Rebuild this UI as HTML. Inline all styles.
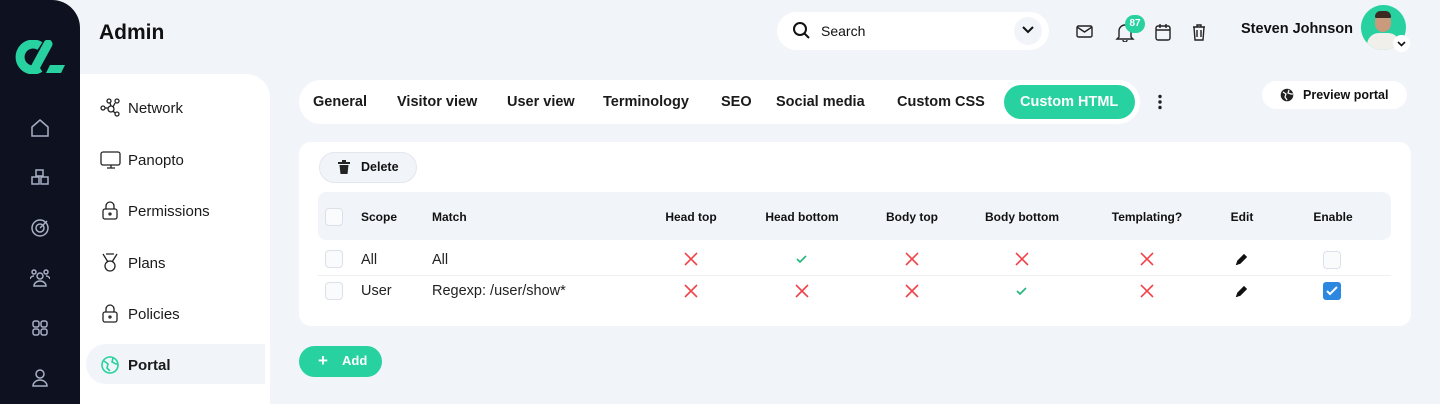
<!DOCTYPE html>
<html><head><meta charset="utf-8"><style>
*{margin:0;padding:0;box-sizing:border-box}
html,body{width:1440px;height:404px;overflow:hidden}
body{background:#f1f4f9;font-family:"Liberation Sans",sans-serif;color:#111;position:relative}
.a{position:absolute;white-space:nowrap}
.side{left:0;top:0;width:80px;height:404px;background:#0d1120;border-top-right-radius:28px}
.t{font-size:14.5px;font-weight:bold;top:94px;color:#1a1a1a}
.m{font-size:15px;left:128px;color:#1a1a1a}
.h{font-size:12px;font-weight:bold;top:210px;transform:translateX(-50%)}
.cb{width:18px;height:18px;border:1px solid #dde0e8;border-radius:4px;background:#fafbfc}
.r{font-size:14.5px;color:#222}
</style></head><body>
<div class="a side"></div>
<svg class="a" style="left:14px;top:40px" width="52" height="34" viewBox="0 0 52 34"><path d="M26 6 A13 13 0 1 0 26 28" fill="none" stroke="#28d1a0" stroke-width="9"/><path d="M34 4 L22 26" stroke="#28d1a0" stroke-width="9" stroke-linecap="round"/><path d="M36 25 H51 L47 33 H32Z" fill="#28d1a0"/></svg>
<svg class="a" style="left:30px;top:118px" width="20" height="280" fill="none" stroke="#aab0c4" stroke-width="1.5">
<path d="M2 9 L10 2 L18 9 V18 H2Z"/>
<g transform="translate(0,50)"><rect x="6" y="2" width="7" height="6"/><rect x="2" y="9" width="7" height="7"/><rect x="11" y="9" width="7" height="7"/></g>
<g transform="translate(0,100)"><circle cx="10" cy="10" r="8"/><circle cx="10" cy="10" r="4"/><path d="M10 10 L17 3"/></g>
<g transform="translate(0,150)"><circle cx="10" cy="8" r="3"/><path d="M4 18 a6 5 0 0 1 12 0Z"/><circle cx="4" cy="4" r="2"/><circle cx="16" cy="4" r="2"/><path d="M0 11a4 4 0 0 1 4-3 M20 11a4 4 0 0 0-4-3"/></g>
<g transform="translate(0,200)"><rect x="3" y="3" width="6" height="6" rx="2"/><rect x="11" y="3" width="6" height="6" rx="2"/><rect x="3" y="11" width="6" height="6" rx="2"/><rect x="11" y="11" width="6" height="6" rx="2"/></g>
<g transform="translate(0,250)"><circle cx="10" cy="6" r="4"/><path d="M3 18 a7 6 0 0 1 14 0Z"/></g>
</svg>
<div class="a" style="left:99px;top:21px;font-size:21px;font-weight:bold">Admin</div>
<div class="a" style="left:80px;top:74px;width:190px;height:330px;background:#fff;border-top-right-radius:24px"></div>
<div class="a" style="left:86px;top:344px;width:179px;height:40px;background:#f1f4f9;border-radius:20px 0 0 20px"></div>
<svg class="a" style="left:100px;top:97px" width="22" height="280" fill="none" stroke="#222" stroke-width="1.3">
<g><circle cx="3" cy="11" r="2"/><circle cx="9" cy="4" r="2"/><circle cx="17" cy="4" r="2"/><circle cx="17" cy="17" r="2"/><circle cx="11" cy="12" r="3"/><path d="M5 11h3M10 6l1 3M15 6l-2 4M15 16l-2-2"/></g>
<g transform="translate(0,52)"><rect x="1" y="3" width="19" height="13" rx="2"/><path d="M7 19h8M11 16v3"/></g>
<g transform="translate(0,103)"><rect x="3" y="9" width="14" height="10" rx="2"/><path d="M6 9V6a4 4 0 0 1 8 0v3"/><circle cx="10" cy="14" r="1"/></g>
<g transform="translate(0,155)"><path d="M3 2l5 8M17 2l-5 8M6 2h8"/><circle cx="10" cy="14" r="5"/></g>
<g transform="translate(0,206)"><rect x="3" y="9" width="14" height="10" rx="2"/><path d="M6 9V6a4 4 0 0 1 8 0v3"/><circle cx="10" cy="14" r="1"/></g>
<g transform="translate(0,258)" stroke="#28d1a0" stroke-width="1.6"><circle cx="10" cy="10" r="8"/><path d="M4 6l4 3-1 4 3 3M13 3l-1 4 4 2 2 0"/></g>
</svg>
<div class="a m" style="top:100px">Network</div>
<div class="a m" style="top:152px">Panopto</div>
<div class="a m" style="top:203px">Permissions</div>
<div class="a m" style="top:255px">Plans</div>
<div class="a m" style="top:306px">Policies</div>
<div class="a m" style="top:357px;font-weight:bold">Portal</div>

<div class="a" style="left:777px;top:12px;width:272px;height:38px;background:#fff;border-radius:19px"></div>
<svg class="a" style="left:793px;top:22px" width="18" height="18" fill="none" stroke="#111" stroke-width="2"><circle cx="7" cy="7" r="6"/><path d="M11.5 11.5L16 16"/></svg>
<div class="a" style="left:821px;top:23px;font-size:14px">Search</div>
<div class="a" style="left:1014px;top:17px;width:28px;height:28px;border-radius:14px;background:#f1f4f9"></div>
<svg class="a" style="left:1021px;top:25px" width="14" height="10" fill="none" stroke="#111" stroke-width="2"><path d="M2 2l5 5 5-5"/></svg>
<svg class="a" style="left:1075px;top:22px" width="140" height="20" fill="none" stroke="#222" stroke-width="1.4">
<rect x="2" y="4" width="15" height="11" rx="1.5"/><path d="M2 5l7.5 5 7.5-5"/>
<path d="M44 15V9a6 6 0 0 1 12 0v6l2 2H42z M48 18a2 2 0 0 0 4 0"/>
<rect x="81" y="4" width="14" height="14" rx="2"/><path d="M81 8h14M85 2v4M91 2v4"/>
<path d="M118 5h12M122 5V3h4v2M119 5l1 13h8l1-13M122 8v7M126 8v7"/></svg>
<div class="a" style="left:1125px;top:15px;width:20px;height:18px;border-radius:9px;background:#28d1a0;color:#fff;font-size:10px;font-weight:bold;text-align:center;line-height:18px">87</div>
<div class="a" style="left:1241px;top:21px;font-size:14.5px;font-weight:bold">Steven Johnson</div>
<div class="a" style="left:1361px;top:5px;width:45px;height:45px;border-radius:50%;background:#28d1a0;overflow:hidden"><div style="position:absolute;left:14px;top:8px;width:16px;height:19px;border-radius:8px;background:#c99a7c"></div><div style="position:absolute;left:14px;top:6px;width:16px;height:7px;border-radius:8px 8px 2px 2px;background:#3a2a22"></div><div style="position:absolute;left:6px;top:28px;width:33px;height:20px;border-radius:12px 12px 0 0;background:#f1efe9"></div></div>
<div class="a" style="left:1393px;top:35px;width:17px;height:17px;border-radius:50%;background:#fff"></div>
<svg class="a" style="left:1397px;top:41px" width="9" height="6" fill="none" stroke="#111" stroke-width="1.6"><path d="M1 1l3.5 3.5L8 1"/></svg>

<div class="a" style="left:299px;top:80px;width:841px;height:44px;background:#fff;border-radius:22px"></div>
<div class="a" style="left:1004px;top:85px;width:131px;height:34px;background:#28d1a0;border-radius:17px"></div>
<div class="a t" style="left:313px">General</div>
<div class="a t" style="left:397px">Visitor view</div>
<div class="a t" style="left:507px">User view</div>
<div class="a t" style="left:603px">Terminology</div>
<div class="a t" style="left:721px">SEO</div>
<div class="a t" style="left:776px">Social media</div>
<div class="a t" style="left:897px">Custom CSS</div>
<div class="a t" style="left:1020px;color:#fff">Custom HTML</div>
<svg class="a" style="left:1157px;top:94px" width="6" height="16" fill="#222"><circle cx="3" cy="2.5" r="1.7"/><circle cx="3" cy="8" r="1.7"/><circle cx="3" cy="13.5" r="1.7"/></svg>
<div class="a" style="left:1262px;top:81px;width:145px;height:28px;background:#fff;border-radius:14px"></div>
<svg class="a" style="left:1280px;top:88px" width="14" height="14"><circle cx="7" cy="7" r="6.3" fill="#222"/><path d="M3 4l3 2-1 3 2 3M9 2l-1 3 3 1 2 0" stroke="#fff" stroke-width="1.2" fill="none"/></svg>
<div class="a" style="left:1303px;top:88px;font-size:12.5px;font-weight:bold">Preview portal</div>

<div class="a" style="left:299px;top:142px;width:1112px;height:184px;background:#fff;border-radius:12px"></div>
<div class="a" style="left:319px;top:152px;width:98px;height:31px;background:#f1f4f9;border:1px solid #e2e6ef;border-radius:16px"></div>
<svg class="a" style="left:338px;top:160px" width="12" height="14" fill="#222"><rect x="0" y="2" width="12" height="2"/><rect x="4" y="0" width="4" height="2"/><path d="M1.5 5h9l-1 9h-7z"/></svg>
<div class="a" style="left:361px;top:160px;font-size:12.5px;font-weight:bold">Delete</div>
<div class="a" style="left:318px;top:192px;width:1073px;height:48px;background:#f1f4f9;border-radius:8px"></div>
<div class="a" style="left:318px;top:275px;width:1073px;height:1px;background:#eef0f4"></div>
<div class="a cb" style="left:325px;top:208px"></div>
<div class="a cb" style="left:325px;top:250px"></div>
<div class="a cb" style="left:325px;top:282px"></div>
<div class="a" style="left:361px;top:210px;font-size:12px;font-weight:bold">Scope</div>
<div class="a" style="left:432px;top:210px;font-size:12px;font-weight:bold">Match</div>
<div class="a h" style="left:691px">Head top</div>
<div class="a h" style="left:802px">Head bottom</div>
<div class="a h" style="left:912px">Body top</div>
<div class="a h" style="left:1022px">Body bottom</div>
<div class="a h" style="left:1147px">Templating?</div>
<div class="a h" style="left:1242px">Edit</div>
<div class="a h" style="left:1333px">Enable</div>
<div class="a r" style="left:361px;top:252px">All</div>
<div class="a r" style="left:432px;top:252px">All</div>
<div class="a r" style="left:361px;top:283px">User</div>
<div class="a r" style="left:432px;top:283px">Regexp: /user/show*</div>
<svg class="a" style="left:0;top:0" width="1440" height="404" fill="none" stroke-width="1.6">
<defs><path id="x" d="M-6-6L6 6M6-6L-6 6" stroke="#f0434a"/><path id="c" d="M-5 0l3 3 6-6" stroke="#20b87a"/><g id="p"><path d="M-5 5l1-3 6-6 2 2-6 6z" stroke="#111" fill="#111"/><path d="M-5 5l2-1" stroke="#111"/></g></defs>
<use href="#x" x="691" y="259"/><use href="#c" x="802" y="259"/><use href="#x" x="912" y="259"/><use href="#x" x="1022" y="259"/><use href="#x" x="1147" y="259"/><use href="#p" x="1242" y="259"/>
<use href="#x" x="691" y="291"/><use href="#x" x="802" y="291"/><use href="#x" x="912" y="291"/><use href="#c" x="1022" y="291"/><use href="#x" x="1147" y="291"/><use href="#p" x="1242" y="291"/>
</svg>
<div class="a cb" style="left:1323px;top:251px"></div>
<div class="a" style="left:1323px;top:282px;width:18px;height:18px;border-radius:3px;background:#2b87e0"></div>
<svg class="a" style="left:1326px;top:286px" width="12" height="10" fill="none" stroke="#fff" stroke-width="2"><path d="M1 5l3 3 7-7"/></svg>
<div class="a" style="left:299px;top:346px;width:83px;height:31px;background:#28d1a0;border-radius:16px"></div>
<div class="a" style="left:318px;top:351px;font-size:17px;font-weight:bold;color:#fff">+</div>
<div class="a" style="left:342px;top:353px;font-size:13px;font-weight:bold;color:#fff">Add</div>
</body></html>
